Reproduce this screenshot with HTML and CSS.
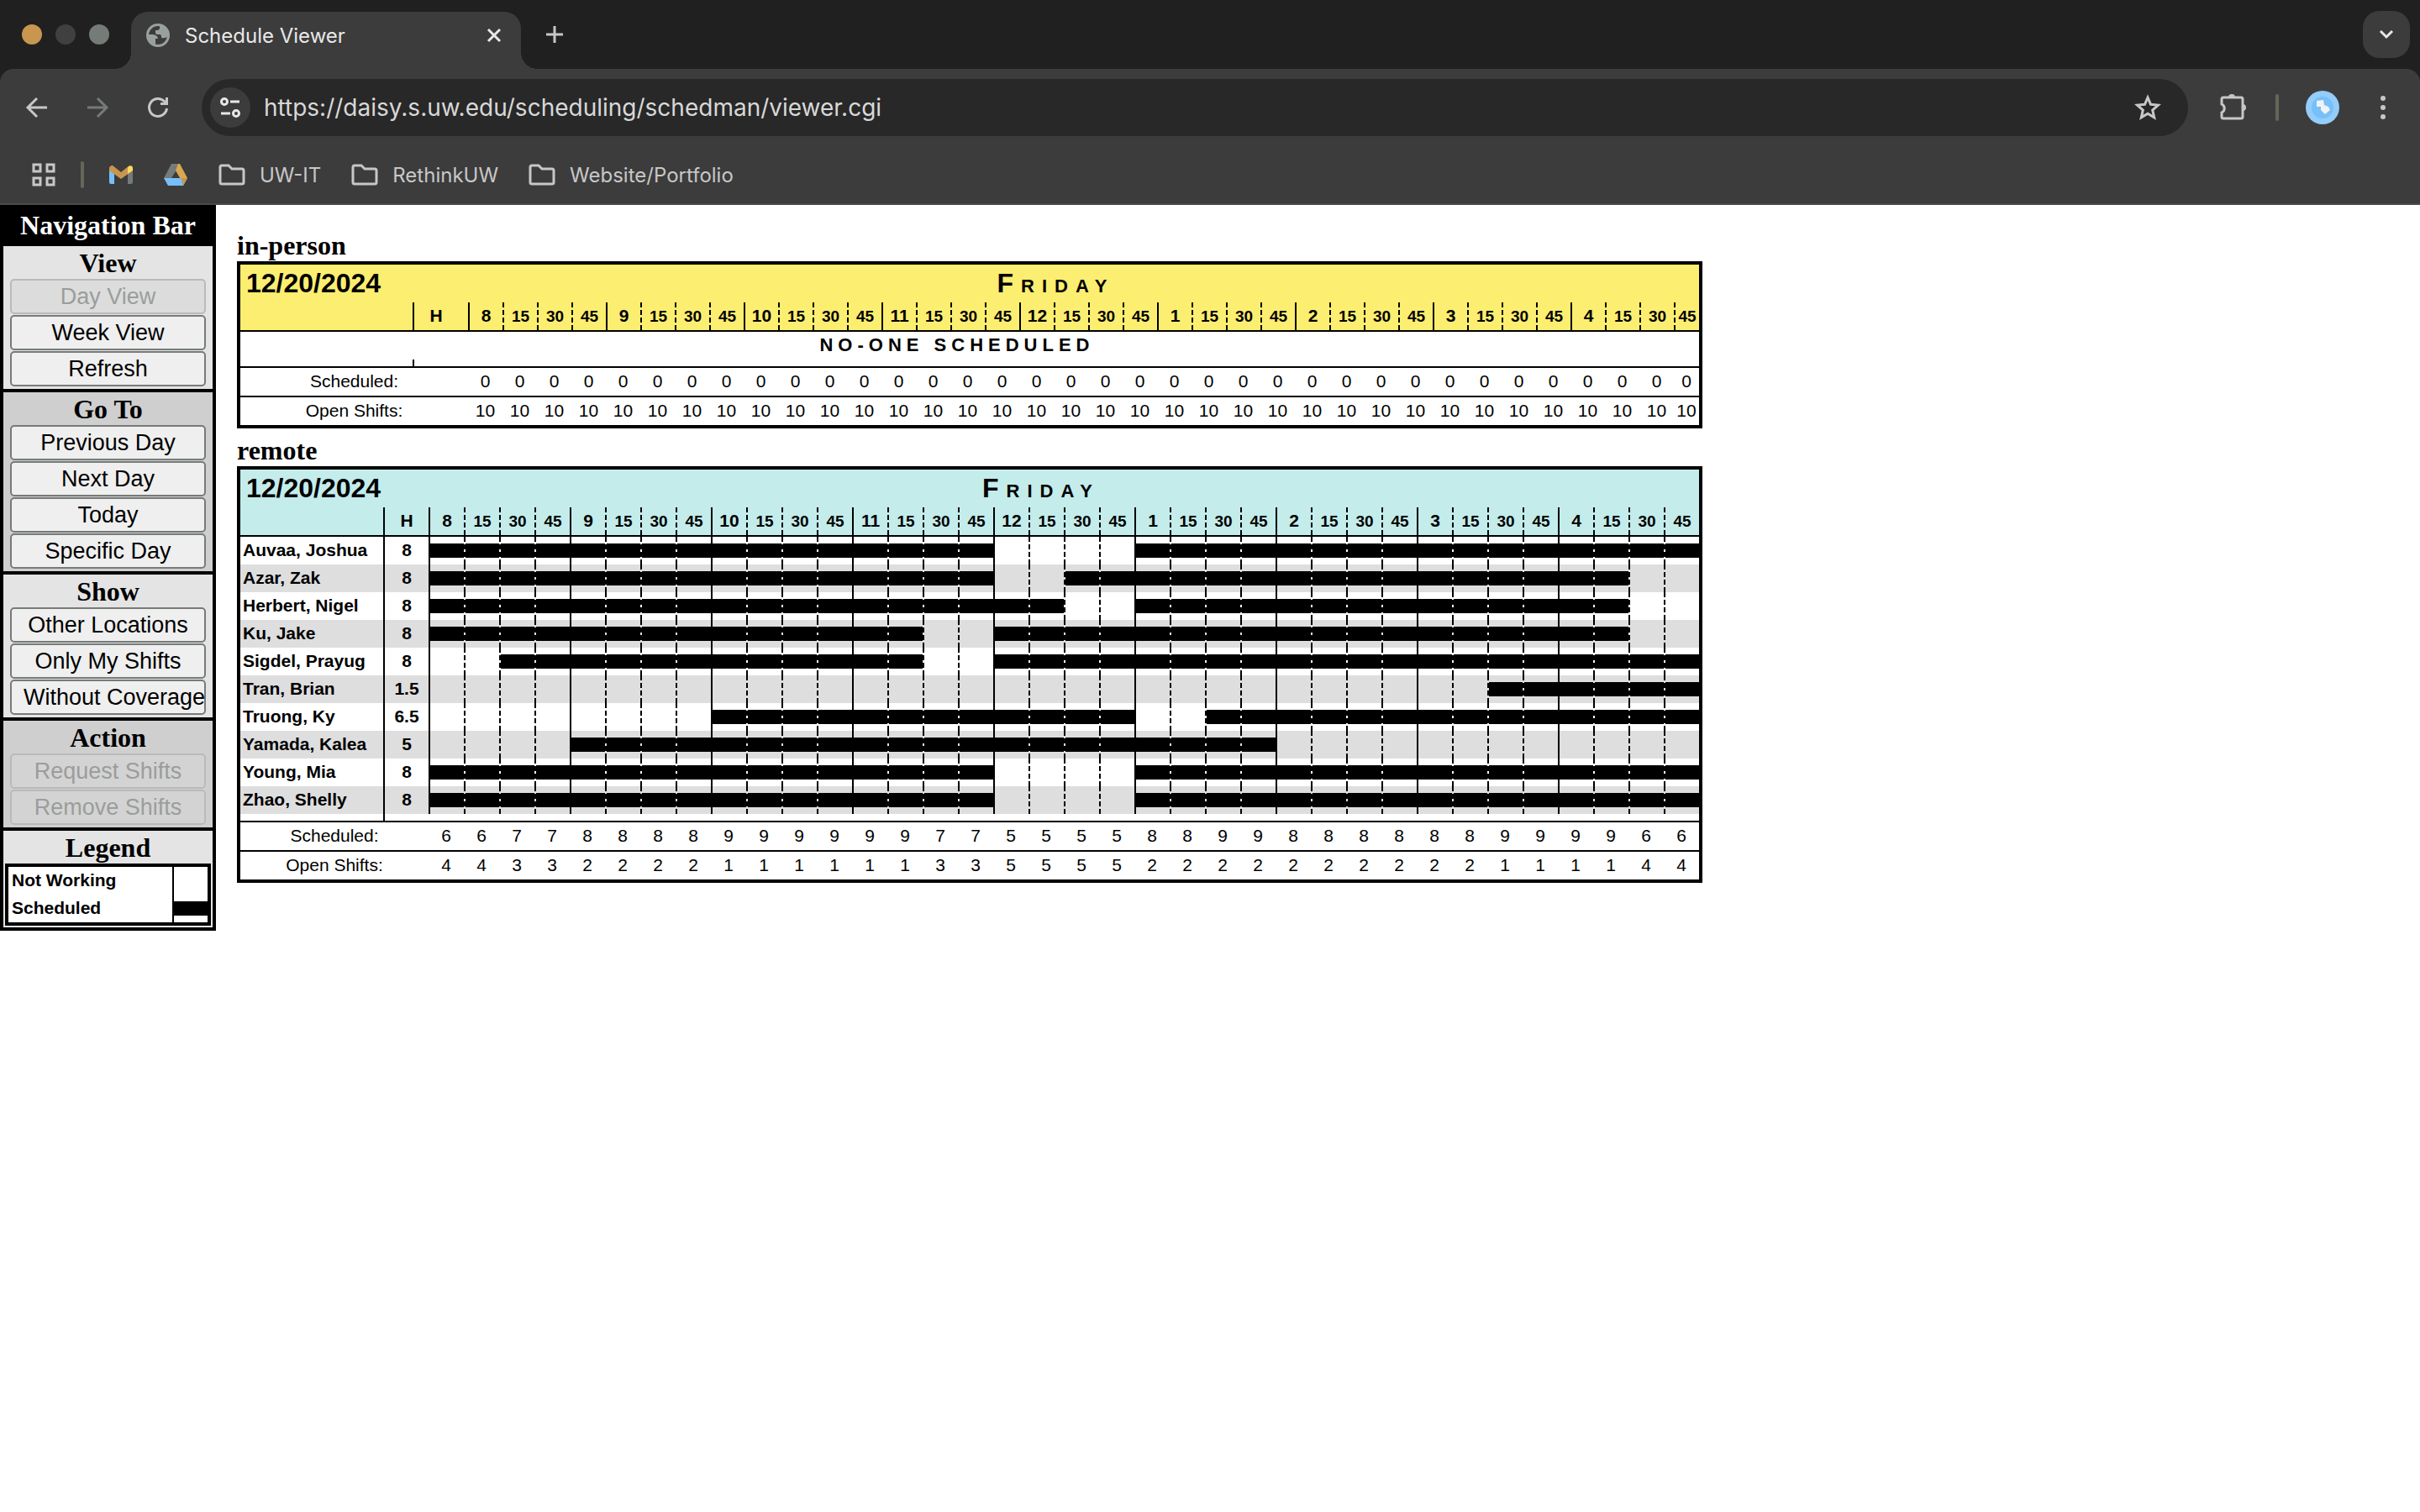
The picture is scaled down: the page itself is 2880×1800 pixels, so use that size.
FILE: index.html
```
<!DOCTYPE html>
<html lang="en">
<head>
<meta charset="utf-8">
<meta name="viewport" content="width=device-width, initial-scale=1">
<title>Schedule Viewer</title>
<link rel="stylesheet" href="styles.css">
</head>
<body>

<header class="browser">
  <div class="tabstrip">
    <span class="light amber"></span>
    <span class="light dark"></span>
    <span class="light grey"></span>
    <div class="tab">
      <svg class="globe" viewBox="0 0 28 28"><circle cx="14" cy="14" r="12.500" fill="none" stroke="#9aa09e" stroke-width="3"/><path d="M16 2v3q0 3-3 3h-2v3q0 2 2 2h3q2 0 2 2v2q4 1 7-1l1-4Q25 3 16 2zM2 13h6q6 1 6 5h-3v7Q3 24 2 13z" fill="#9aa09e"/></svg>
      <span class="tab-title">Schedule Viewer</span>
      <button class="close" aria-label="Close tab"><svg width="20" height="20" viewBox="0 0 20 20"><path d="M3 3l14 14M17 3L3 17" class="line"/></svg></button>
    </div>
    <button class="new-tab" aria-label="New tab"><svg width="22" height="22" viewBox="0 0 22 22"><path d="M11 1v20M1 11h20" class="line"/></svg></button>
    <button class="tab-search" aria-label="Search tabs"><svg width="20" height="14" viewBox="0 0 20 14"><path d="M3 3l7 7 7-7" class="line"/></svg></button>
  </div>

  <div class="toolbar">
    <button class="icon" aria-label="Back"><svg width="28" height="28" viewBox="0 0 28 28"><path d="M26 14H4M14 3L3 14l11 11" class="line"/></svg></button>
    <button class="icon faded" aria-label="Forward"><svg width="28" height="28" viewBox="0 0 28 28"><path d="M2 14h22M14 3l11 11-11 11" class="line"/></svg></button>
    <button class="icon" aria-label="Reload"><svg width="28" height="28" viewBox="0 0 28 28"><path d="M24.500 15a10.500 10.500 0 1 1-3-8.500l3 3" class="line"/><path d="M23 2h3v9h-9V8h6z" fill="#c7c7c7"/></svg></button>
    <div class="omnibox">
      <button class="site-info" aria-label="View site information"><svg width="26" height="26" viewBox="0 0 26 26"><circle cx="6" cy="6" r="3.500" class="line"/><path d="M13 6h11M2 20h11" class="line"/><circle cx="20" cy="20" r="3.500" class="line"/></svg></button>
      <input class="url" type="text" aria-label="Address" value="https://daisy.s.uw.edu/scheduling/schedman/viewer.cgi">
      <button class="star" aria-label="Bookmark this tab"><svg width="32" height="32" viewBox="0 0 32 32"><path d="M16 4l3.500 8.300 9 .8-6.800 5.900 2 8.800L16 23.200l-7.700 4.600 2-8.800-6.800-5.900 9-.8z" class="line"/></svg></button>
    </div>
    <button class="icon" aria-label="Extensions"><svg width="36" height="36" viewBox="0 0 36 36"><path d="M6 8q0-2 2-2h21q2 0 2 2v21q0 2-2 2H8q-2 0-2-2v-5a5.500 5.500 0 0 0 0-10z" class="line"/><path d="M14 6a4 4 0 0 1 8 0zM31 14a4 4 0 0 1 0 8z" fill="#c7c7c7"/></svg></button>
    <span class="divider"></span>
    <button class="avatar" aria-label="Profile"><svg width="40" height="40" viewBox="0 0 40 40"><circle cx="20" cy="20" r="20" fill="#94ccfa"/><circle cx="20" cy="20" r="13" fill="#77bff8"/><path d="M13 12l8-1 1 6 5 2 2 4-6 5-5-5 0-4-5 0z" fill="#f0f3f3"/></svg></button>
    <button class="icon menu" aria-label="Menu"><svg width="8" height="30" viewBox="0 0 8 30"><circle cx="4" cy="4" r="3"/><circle cx="4" cy="15" r="3"/><circle cx="4" cy="26" r="3"/></svg></button>
  </div>

  <nav class="bookmarks">
    <button class="apps" aria-label="Apps"><svg width="28" height="28" viewBox="0 0 28 28"><path d="M2 2h8v8H2zM18 2h8v8h-8zM2 18h8v8H2zM18 18h8v8h-8z" class="line"/></svg></button>
    <span class="divider"></span>
    <a class="bookmark gmail" href="#" aria-label="Gmail"><svg width="28" height="22" viewBox="0 0 28 22"><path d="M0 3l6 5v14H2q-2 0-2-2z" fill="#77bff8"/><path d="M22 8l6-5v17q0 2-2 2h-4z" fill="#757b76"/><path d="M0 4Q0 0 4 0l10 8L24 0q4 0 4 4v2L14 16 0 6z" fill="#c8964f"/><path d="M22 2q6-4 6 2v2l-6 4z" fill="#fbd95b"/></svg></a>
    <a class="bookmark" href="#" aria-label="Drive"><svg width="30" height="28" viewBox="0 0 30 28"><path d="M10 1h10l-4 8-8 17-7-8z" fill="#757b76"/><path d="M18 1h2l9 17h-9l-5-9z" fill="#d9a950"/><path d="M1 18h28l-5 9H6z" fill="#77bff8"/><path d="M21 18h8l-5 9z" fill="#c8964f"/><path d="M15 10l5 8H10z" fill="#3c3c3c"/></svg></a>
    <a class="bookmark" href="#"><svg width="32" height="26" viewBox="0 0 32 26"><path class="line" d="M2 4q0-2 2-2h8l4 4h12q2 0 2 2v14q0 2-2 2H4q-2 0-2-2z"/></svg>UW-IT</a>
    <a class="bookmark" href="#"><svg width="32" height="26" viewBox="0 0 32 26"><path class="line" d="M2 4q0-2 2-2h8l4 4h12q2 0 2 2v14q0 2-2 2H4q-2 0-2-2z"/></svg>RethinkUW</a>
    <a class="bookmark" href="#"><svg width="32" height="26" viewBox="0 0 32 26"><path class="line" d="M2 4q0-2 2-2h8l4 4h12q2 0 2 2v14q0 2-2 2H4q-2 0-2-2z"/></svg>Website/Portfolio</a>
  </nav>
</header>

<div class="page">
  <nav class="sidebar">
    <h1>Navigation Bar</h1>
    <section>
      <h2>View</h2>
      <button disabled>Day View</button>
      <button>Week View</button>
      <button>Refresh</button>
    </section>
    <section class="shaded">
      <h2>Go To</h2>
      <button>Previous Day</button>
      <button>Next Day</button>
      <button>Today</button>
      <button>Specific Day</button>
    </section>
    <section>
      <h2>Show</h2>
      <button>Other Locations</button>
      <button>Only My Shifts</button>
      <button>Without Coverage</button>
    </section>
    <section class="shaded">
      <h2>Action</h2>
      <button disabled>Request Shifts</button>
      <button disabled>Remove Shifts</button>
    </section>
    <section class="legend">
      <h2>Legend</h2>
      <table>
        <tr><th>Not Working</th><td></td></tr>
        <tr><th>Scheduled</th><td><div class="bar"></div></td></tr>
      </table>
    </section>
  </nav>

  <main>
    <h2>in-person</h2>
    <table class="schedule in-person" id="in-person"></table>
    <h2>remote</h2>
    <table class="schedule remote" id="remote"></table>
  </main>
</div>

<script src="script.js"></script>
</body>
</html>
```
FILE: script.js
```
// every column is a quarter hour, column 0 is 8:00
const SLOTS = 36;
const hours = [8, 9, 10, 11, 12, 1, 2, 3, 4];

const inPerson = {
  people: [],
  scheduled: Array(SLOTS).fill(0),
  open: Array(SLOTS).fill(10)
};

const remote = {
  people: [
    { name: "Auvaa, Joshua", hours: 8, shifts: [[0, 16], [20, 36]] },
    { name: "Azar, Zak", hours: 8, shifts: [[0, 16], [18, 34]] },
    { name: "Herbert, Nigel", hours: 8, shifts: [[0, 18], [20, 34]] },
    { name: "Ku, Jake", hours: 8, shifts: [[0, 14], [16, 34]] },
    { name: "Sigdel, Prayug", hours: 8, shifts: [[2, 14], [16, 36]] },
    { name: "Tran, Brian", hours: 1.5, shifts: [[30, 36]] },
    { name: "Truong, Ky", hours: 6.5, shifts: [[8, 20], [22, 36]] },
    { name: "Yamada, Kalea", hours: 5, shifts: [[4, 24]] },
    { name: "Young, Mia", hours: 8, shifts: [[0, 16], [20, 36]] },
    { name: "Zhao, Shelly", hours: 8, shifts: [[0, 16], [20, 36]] }
  ],
  scheduled: [6,6,7,7, 8,8,8,8, 9,9,9,9, 9,9,7,7, 5,5,5,5, 8,8,9,9, 8,8,8,8, 8,8,9,9, 9,9,6,6],
  open: [4,4,3,3, 2,2,2,2, 1,1,1,1, 1,1,3,3, 5,5,5,5, 2,2,2,2, 2,2,2,2, 2,2,1,1, 1,1,4,4]
};

function slots(cell) {
  let html = "";
  for (let i = 0; i < SLOTS; i++) html += cell(i);
  return html;
}

function slotClass(i) {
  return i % 4 ? "quarter" : "hour";
}

function totals(label, values) {
  return `<tr class="rule"><td colspan="38"></td></tr>
    <tr class="totals"><th colspan="2">${label}</th>${slots(i => `<td>${values[i]}</td>`)}</tr>`;
}

function render(id, data) {
  let html = `<colgroup><col class="c-name"><col class="c-hours"><col class="c-slot" span="35"><col></colgroup>
    <tr class="title"><th class="date">12/20/2024</th><th class="day" colspan="37">Friday</th></tr>
    <tr class="times"><th></th><th class="total">H</th>`;
  html += slots(i => `<th class="${slotClass(i)}">${i % 4 ? (i % 4) * 15 : hours[i / 4]}</th>`);
  html += `</tr><tr class="rule"><td colspan="38"></td></tr>`;

  if (!data.people.length) {
    html += `<tr class="nobody"><th colspan="37">NO-ONE SCHEDULED</th><td></td></tr>`;
  }
  data.people.forEach(p => {
    const on = i => p.shifts.some(s => i >= s[0] && i < s[1]);
    html += `<tr class="person"><th class="name">${p.name}</th><th class="total">${p.hours}</th>`;
    html += slots(i => `<td class="${slotClass(i)}">${on(i) ? '<div class="bar"></div>' : ""}</td>`);
    html += "</tr>";
  });

  html += `<tr class="spacer"><td></td><td class="total"></td><td colspan="36"></td></tr>`;
  html += totals("Scheduled:", data.scheduled) + totals("Open Shifts:", data.open);
  document.getElementById(id).innerHTML = html;
}

render("in-person", inPerson);
render("remote", remote);
```
FILE: styles.css
```
* {
  box-sizing: border-box;
}

body {
  margin: 0;
  background: #fff;
  color: #000;
  font-family: "Liberation Sans", Arial, Helvetica, sans-serif;
}

h1, h2 {
  margin: 0;
  font: bold 32px/37px "Liberation Serif", "Times New Roman", serif;
}

table {
  border-spacing: 0;
}

th, td {
  padding: 0;
}

/* browser window */
.browser {
  background: #202020;
  color: #c7c7c7;
  font-family: Inter, sans-serif;
  font-size: 24px;
}

.browser button {
  display: flex;
  align-items: center;
  justify-content: center;
  padding: 0;
  border: 0;
  background: none;
  color: inherit;
}

.line {
  fill: none;
  stroke: currentColor;
  stroke-width: 3;
}

.tabstrip {
  display: flex;
  align-items: center;
  height: 82px;
  padding: 0 12px 0 26px;
}

.light {
  width: 24px;
  height: 24px;
  margin-right: 16px;
  border-radius: 50%;
}

.amber { background: #c8964f; }
.dark { background: #404040; }
.grey { background: #757b76; }

.tab {
  position: relative;
  display: flex;
  align-items: center;
  align-self: flex-end;
  width: 464px;
  height: 68px;
  margin-left: 10px;
  padding: 0 16px 12px 18px;
  border-radius: 20px 20px 0 0;
  background: #3c3c3c;
  color: #e8e8e8;
}

.tab::before, .tab::after {
  content: "";
  position: absolute;
  bottom: 0;
  width: 20px;
  height: 20px;
}

.tab::before {
  left: -20px;
  background: radial-gradient(circle at 0 0, transparent 20px, #3c3c3c 20px);
}

.tab::after {
  right: -20px;
  background: radial-gradient(circle at 100% 0, transparent 20px, #3c3c3c 20px);
}

.globe {
  width: 28px;
  height: 28px;
  margin-right: 18px;
}

.tab-title {
  flex: 1;
}

.browser .close {
  width: 32px;
  height: 32px;
}

.browser .new-tab {
  width: 48px;
  height: 48px;
  margin-left: 16px;
}

.browser .tab-search {
  width: 56px;
  height: 56px;
  margin-left: auto;
  border-radius: 20px;
  background: #3c3c3c;
  color: #e8e8e8;
}

.toolbar {
  display: flex;
  align-items: center;
  height: 92px;
  padding: 0 16px;
  border-radius: 16px 16px 0 0;
  background: #3c3c3c;
}

.browser .icon {
  width: 56px;
  height: 56px;
  margin-right: 16px;
}

.browser .faded {
  color: #757b76;
}

.omnibox {
  display: flex;
  flex: 1;
  align-items: center;
  height: 68px;
  margin: 0 24px 0 8px;
  padding: 0 24px 0 10px;
  border-radius: 34px;
  background: #282828;
}

.browser .site-info {
  width: 48px;
  height: 48px;
  border-radius: 50%;
  background: #3c3c3c;
  color: #e8e8e8;
}

.url {
  flex: 1;
  height: 48px;
  padding: 0 16px;
  border: 0;
  background: none;
  color: #d8d8d8;
  font: 28px Inter, sans-serif;
}

.browser .star {
  width: 48px;
  height: 48px;
}

.divider {
  width: 4px;
  height: 32px;
  border-radius: 2px;
  background: #65655a;
}

.toolbar .divider {
  margin: 0 32px 0 8px;
}

.browser .avatar {
  margin-right: 24px;
}

.browser .menu {
  margin-right: 0;
  fill: currentColor;
}

.bookmarks {
  display: flex;
  align-items: center;
  gap: 36px;
  height: 70px;
  padding-left: 38px;
  border-bottom: 2px solid #4a4a4a;
  background: #3c3c3c;
}

.bookmarks .divider {
  margin: 0 -6px;
}

.bookmark {
  display: flex;
  align-items: center;
  gap: 17px;
  color: inherit;
  text-decoration: none;
}

/* page */
.page {
  display: flex;
  align-items: flex-start;
}

.sidebar {
  display: flex;
  flex-direction: column;
  gap: 4px;
  width: 257px;
  padding: 0 4px 4px;
  background: #000;
  text-align: center;
}

.sidebar h1 {
  padding: 6px 0 2px;
  color: #fff;
}

.sidebar section {
  display: flex;
  flex-direction: column;
  gap: 1px;
  padding: 2px 8px 3px;
  background: #e4e4e4;
}

.sidebar h2 {
  margin-bottom: -1px;
}

.sidebar .shaded {
  background: #cfcfcf;
}

.sidebar button {
  height: 42px;
  padding: 0 14px;
  border: 2px solid #767b78;
  border-radius: 5px;
  background: #efefef;
  color: #000;
  font: 27px "Liberation Sans", Arial, sans-serif;
  white-space: nowrap;
}

.sidebar button:disabled {
  border-color: #b9bab9;
  background: #dcdcdc;
  color: #9a9d9b;
}

.sidebar .shaded button:disabled {
  background: #d3d3d3;
}

.sidebar .legend {
  padding: 2px;
}

.legend table {
  border: 4px solid #000;
  background: #fff;
  font-size: 21px;
}

.legend tr {
  height: 33px;
}

.legend th {
  padding: 0 0 2px 4px;
  text-align: left;
}

.legend td {
  width: 42px;
  border-left: 2px solid #000;
}

.bar {
  height: 17px;
  background: #000;
}

main {
  padding: 30px 25px;
}

/* schedules */
.schedule {
  width: 1744px;
  margin-bottom: 8px;
  border: 4px solid #000;
  table-layout: fixed;
  font-size: 21px;
  text-align: center;
}

.in-person .c-name { width: 205px; }
.in-person .c-hours { width: 66px; }
.in-person .c-slot { width: 41px; }
.remote .c-name { width: 170px; }
.remote .c-hours { width: 54px; }
.remote .c-slot { width: 42px; }

.in-person .title, .in-person .times {
  background: #fcee70;
}

.remote .title, .remote .times {
  background: #c3eceb;
}

.title {
  height: 45px;
  font-size: 32px;
}

.date {
  padding-left: 7px;
  text-align: left;
}

.day {
  font-variant: small-caps;
  letter-spacing: 9px;
}

.times, .person, .totals, .nobody {
  height: 33px;
}

.times th, .person th, .nobody th, .totals th, .totals td {
  padding-bottom: 2px;
}

.total, .hour {
  border-left: 2px solid #000;
}

.quarter {
  border-left: 2px dashed #000;
}

.times .quarter {
  padding-top: 3px;
  font-size: 19px;
}

.in-person .times .total {
  padding-right: 12px;
}

.rule {
  height: 2px;
  background: #000;
}

.person:nth-child(even of .person) {
  background: #dedede;
}

.person .name {
  padding-left: 3px;
  text-align: left;
}

.nobody {
  font-size: 22px;
  letter-spacing: 6px;
}

.spacer {
  height: 8px;
}

.totals th {
  font-weight: normal;
}
```
